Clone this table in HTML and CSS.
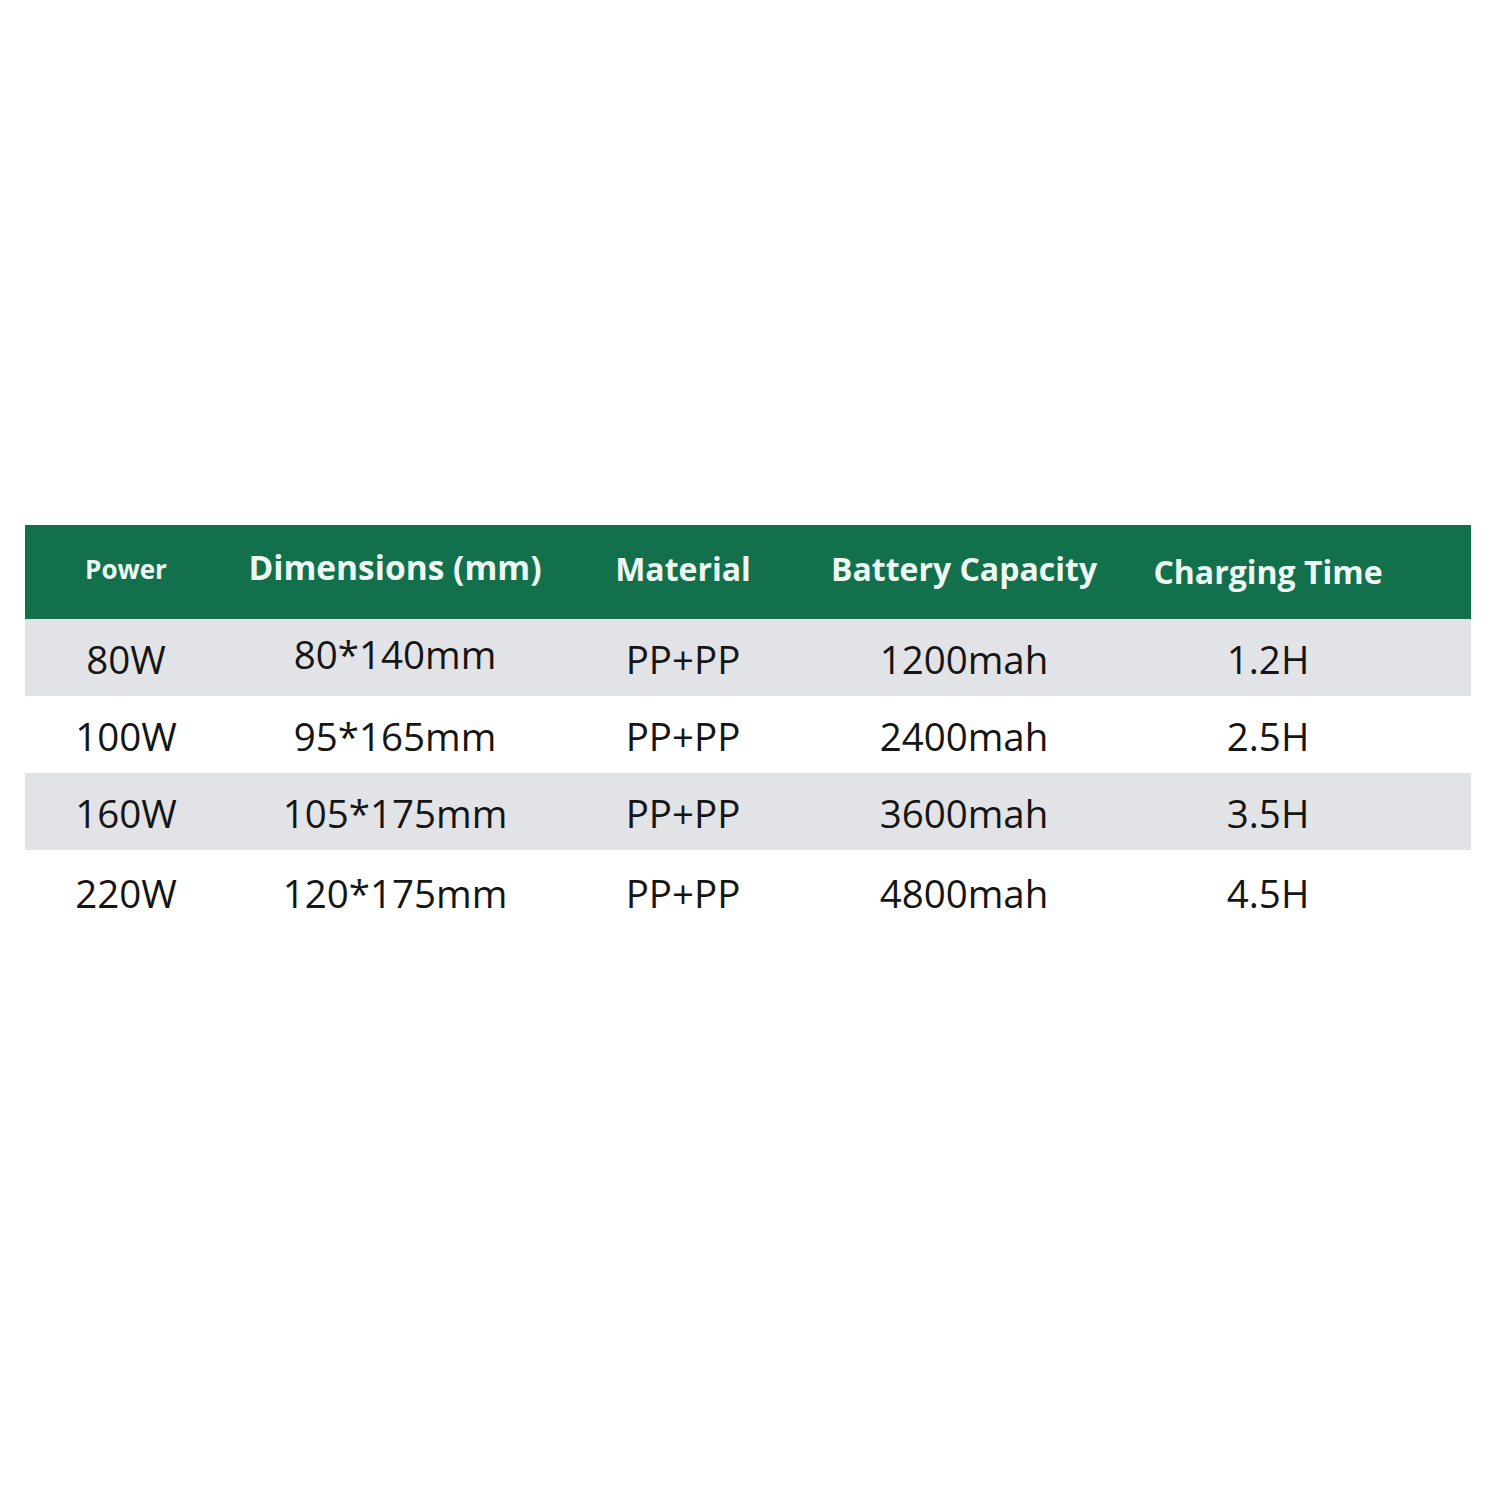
FILE: index.html
```html
<!DOCTYPE html>
<html>
<head>
<meta charset="utf-8">
<link rel="stylesheet" href="styles.css">
</head>
<body>
<div class="page">
  <div class="spec">
    <div class="row head">
      <div class="cell h-sm">Power</div>
      <div class="cell h-lg">Dimensions (mm)</div>
      <div class="cell">Material</div>
      <div class="cell">Battery Capacity</div>
      <div class="cell h-low">Charging Time</div>
    </div>
    <div class="row shade">
      <div class="cell">80W</div>
      <div class="cell up">80*140mm</div>
      <div class="cell">PP+PP</div>
      <div class="cell">1200mah</div>
      <div class="cell">1.2H</div>
    </div>
    <div class="row">
      <div class="cell">100W</div>
      <div class="cell">95*165mm</div>
      <div class="cell">PP+PP</div>
      <div class="cell">2400mah</div>
      <div class="cell">2.5H</div>
    </div>
    <div class="row shade">
      <div class="cell">160W</div>
      <div class="cell">105*175mm</div>
      <div class="cell">PP+PP</div>
      <div class="cell">3600mah</div>
      <div class="cell">3.5H</div>
    </div>
    <div class="row last">
      <div class="cell">220W</div>
      <div class="cell">120*175mm</div>
      <div class="cell">PP+PP</div>
      <div class="cell">4800mah</div>
      <div class="cell">4.5H</div>
    </div>
  </div>
</div>
</body>
</html>
```

FILE: styles.css
```css
html, body {
  margin: 0;
  padding: 0;
  background: #ffffff;
}

.page {
  width: 1500px;
  height: 1500px;
  box-sizing: border-box;
  padding: 525px 29px 0 25px;
}

.spec {
  width: 1446px;
  font-family: "Open Sans", "Liberation Sans", sans-serif;
  color: #151515;
}

.row {
  display: grid;
  grid-template-columns: 202px 336px 240px 322px 286px 60px;
  height: 77px;
  align-items: center;
  font-size: 38.5px;
  line-height: 1;
}

.row .cell {
  text-align: center;
  white-space: nowrap;
  padding-top: 4px;
}

.row .cell.up {
  padding-top: 0;
  margin-top: -6px;
}

.head {
  height: 94px;
  background: #13704d;
  color: #eef8f2;
  font-weight: 700;
  font-size: 32px;
}

.head .cell {
  padding-top: 0;
  margin-top: -6px;
}

.head .h-sm {
  font-size: 26px;
}

.head .h-lg {
  font-size: 33.5px;
  margin-top: -8px;
}

.head .h-low {
  margin-top: 0;
}

.shade {
  background: #e2e3e6;
}

.row.last .cell {
  padding-top: 10px;
}
```
